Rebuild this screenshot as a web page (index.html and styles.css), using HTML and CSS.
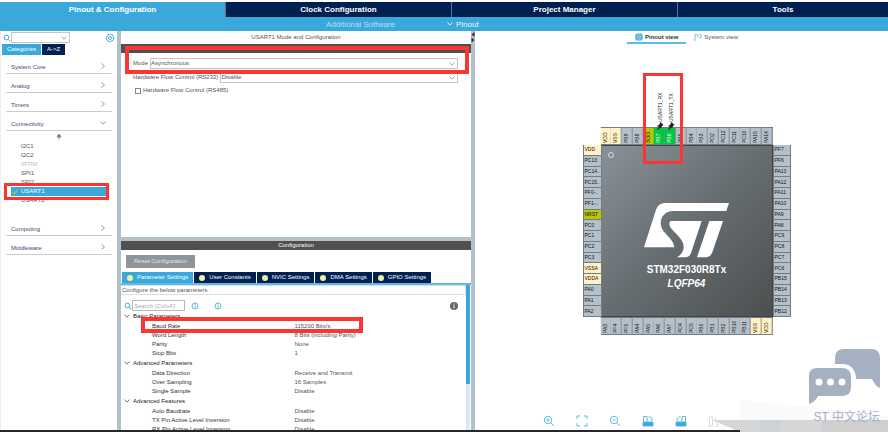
FILE: index.html
```html
<!DOCTYPE html>
<html lang="en">
<head>
    <meta charset="utf-8">
    <title>STM32CubeMX - Pinout &amp; Configuration</title>
    <link rel="stylesheet" href="styles.css">
</head>
<body>
    <!-- Shared icons -->
    <svg class="defs" aria-hidden="true">
        <symbol id="down" viewBox="0 0 8 8"><path d="M1.500 2.500L4 5.200L6.500 2.500" fill="none" stroke="currentColor"/></symbol>
        <symbol id="right" viewBox="0 0 8 8"><path d="M2.500 1.500L5.500 4L2.500 6.500" fill="none" stroke="currentColor"/></symbol>
        <symbol id="search" viewBox="0 0 8 8"><circle cx="3.500" cy="3.500" r="2.400" fill="none" stroke="currentColor"/><path d="M5.300 5.300L7.500 7.500" stroke="currentColor"/></symbol>
        <symbol id="info" viewBox="0 0 8 8"><circle cx="4" cy="4" r="3" fill="none" stroke="currentColor" stroke-width=".8"/><path d="M4 2.300v.8M4 3.700v2" stroke="currentColor"/></symbol>
        <symbol id="pushpin" viewBox="0 0 8 8"><path d="M4.500 0L8 3L6.500 3.500L5.500 6L4.500 5.500L2 8L1.500 7.500L3 4.800L1 4L3.500 2.800Z" fill="#222"/></symbol>
    </svg>

    <nav class="main-tabs">
        <button class="active">Pinout &amp; Configuration</button>
        <button>Clock Configuration</button>
        <button>Project Manager</button>
        <button>Tools</button>
    </nav>
    <div class="sub-bar">
        <a href="#" class="software">Additional Software</a>
        <a href="#" class="pinout"><svg><use href="#down"/></svg>Pinout</a>
    </div>

    <main>
        <aside class="sidebar">
            <div class="search-row">
                <svg class="icon"><use href="#search"/></svg>
                <span class="combo">
                    <select aria-label="Search peripheral"><option></option></select>
                    <svg><use href="#down"/></svg>
                </span>
                <button class="gear" aria-label="Settings">
                    <svg viewBox="0 0 10 10"><circle cx="5" cy="5" r="3.600" fill="none" stroke="#58b5e0" stroke-width="1.400" stroke-dasharray="1.800 .5"/><circle cx="5" cy="5" r="1.500" fill="none" stroke="#58b5e0"/></svg>
                </button>
            </div>
            <div class="side-tabs">
                <button class="active">Categories</button>
                <button>A-&gt;Z</button>
            </div>
            <div class="categories">
                <button>System Core <svg><use href="#right"/></svg></button>
                <button>Analog <svg><use href="#right"/></svg></button>
                <button>Timers <svg><use href="#right"/></svg></button>
                <button>Connectivity <svg><use href="#down"/></svg></button>
                <div class="peripherals">
                    <svg class="sort" viewBox="0 0 6 6"><path d="M3 0L5 2.500H1ZM1 3.500H5M3 2v4" fill="#777" stroke="#777" stroke-width=".6"/></svg>
                    <ul>
                        <li>I2C1</li>
                        <li>I2C2</li>
                        <li class="disabled">IRTIM</li>
                        <li>SPI1</li>
                        <li>SPI2</li>
                        <li class="selected"><svg viewBox="0 0 6 6"><path d="M.5 3L2.300 5L5.500 1" fill="none" stroke="#a4c81c" stroke-width="1.300"/></svg>USART1</li>
                        <li>USART2</li>
                    </ul>
                    <div class="mark mark-usart"></div>
                </div>
                <button>Computing <svg><use href="#right"/></svg></button>
                <button>Middleware <svg><use href="#right"/></svg></button>
            </div>
        </aside>

        <section class="config">
            <div class="mode-panel">
                <h1>USART1 Mode and Configuration</h1>
                <h2>Mode</h2>
                <div class="mode-form">
                    <div class="field">
                        <label for="mode">Mode</label>
                        <span class="combo">
                            <select id="mode"><option>Asynchronous</option></select>
                            <svg><use href="#down"/></svg>
                        </span>
                    </div>
                    <div class="field">
                        <label for="flow">Hardware Flow Control (RS232)</label>
                        <span class="combo">
                            <select id="flow"><option>Disable</option></select>
                            <svg><use href="#down"/></svg>
                        </span>
                    </div>
                    <label class="check"><input type="checkbox">Hardware Flow Control (RS485)</label>
                </div>
                <div class="mark mark-mode"></div>
            </div>

            <div class="param-panel">
                <h2>Configuration</h2>
                <button class="reset">Reset Configuration</button>
                <div class="param-tabs">
                    <button class="active">Parameter Settings</button>
                    <button>User Constants</button>
                    <button>NVIC Settings</button>
                    <button>DMA Settings</button>
                    <button>GPIO Settings</button>
                </div>
                <div class="param-body">
                    <div class="params">
                        <p>Configure the below parameters :</p>
                        <div class="param-search">
                            <svg class="icon"><use href="#search"/></svg>
                            <input type="text" placeholder="Search (Crtl+F)" aria-label="Search parameters">
                            <button aria-label="Previous"><svg><use href="#info"/></svg></button>
                            <button aria-label="Next"><svg><use href="#info"/></svg></button>
                            <button class="help" aria-label="Information"><svg viewBox="0 0 8 8"><circle cx="4" cy="4" r="4" fill="#666"/><path d="M4 1.500v1.200M4 3.300v3" stroke="#fff"/></svg></button>
                        </div>
                        <table>
                            <tr class="group"><th colspan="2"><svg><use href="#down"/></svg>Basic Parameters</th></tr>
                            <tr><td>Baud Rate</td><td>115200 Bits/s</td></tr>
                            <tr><td>Word Length</td><td>8 Bits (including Parity)</td></tr>
                            <tr><td>Parity</td><td>None</td></tr>
                            <tr><td>Stop Bits</td><td>1</td></tr>
                            <tr class="group"><th colspan="2"><svg><use href="#down"/></svg>Advanced Parameters</th></tr>
                            <tr><td>Data Direction</td><td>Receive and Transmit</td></tr>
                            <tr><td>Over Sampling</td><td>16 Samples</td></tr>
                            <tr><td>Single Sample</td><td>Disable</td></tr>
                            <tr class="group"><th colspan="2"><svg><use href="#down"/></svg>Advanced Features</th></tr>
                            <tr><td>Auto Baudrate</td><td>Disable</td></tr>
                            <tr><td>TX Pin Active Level Inversion</td><td>Disable</td></tr>
                            <tr><td>RX Pin Active Level Inversion</td><td>Disable</td></tr>
                        </table>
                        <div class="mark mark-baud"></div>
                    </div>
                    <div class="scrollbar"><div class="thumb"></div></div>
                </div>
            </div>
        </section>

        <div class="splitter">
            <svg viewBox="0 0 4 12"><path d="M3.500 1L.5 3.500L3.500 6ZM.5 6.500L3.500 9L.5 11.500Z" fill="#333"/></svg>
        </div>

        <section class="view">
            <div class="view-tabs">
                <button class="active"><svg viewBox="0 0 8 8"><rect x="1" y="1" width="6" height="6" rx="1" fill="#8accea" stroke="#3ba8dc"/><path d="M0 3h8M0 5h8" stroke="#3ba8dc" stroke-width=".6"/></svg>Pinout view</button>
                <button><svg viewBox="0 0 8 8"><path d="M1 8V1.500H3M4 1.500V4.500M5.500 1.500H7V5H5.500" fill="none" stroke="#6fbfe4"/></svg>System view</button>
            </div>

            <div class="chip">
                <ol class="pins top">
                    <li class="power">VDD</li><li class="power">VSS</li><li>PB9</li><li>PB8</li><li class="boot">BOO..</li>
                    <li class="used">PB7<span class="signal">USART1_RX</span><svg><use href="#pushpin"/></svg></li>
                    <li class="used">PB6<span class="signal">USART1_TX</span><svg><use href="#pushpin"/></svg></li>
                    <li>PB5</li><li>PB4</li><li>PB3</li><li>PD2</li><li>PC12</li><li>PC11</li><li>PC10</li><li>PA15</li><li>PA14</li>
                </ol>
                <ol class="pins left">
                    <li class="power">VDD</li><li>PC13</li><li>PC14..</li><li>PC15..</li><li>PF0-..</li><li>PF1-..</li><li class="boot">NRST</li><li>PC0</li>
                    <li>PC1</li><li>PC2</li><li>PC3</li><li class="power">VSSA</li><li class="power">VDDA</li><li>PA0</li><li>PA1</li><li>PA2</li>
                </ol>
                <div class="die">
                    <span class="dot"></span>
                    <svg class="logo" viewBox="0 0 255 165">
                        <path fill="#fff" d="M255 0H66C49 0 41 7 36 20L0 133H91C90 124 86 116 79 107L60 86C40 62 52 24 88 24H247Z"/>
                        <path fill="#fff" d="M79 54H173L141 150Q136 163 124 163H98C119 153 124 132 114 114C106 100 89 86 81 76C75 68 75 60 79 54Z"/>
                        <path fill="#fff" d="M196 54H237L205 148Q199 163 184 163H159Z"/>
                    </svg>
                    <strong>STM32F030R8Tx</strong>
                    <em>LQFP64</em>
                </div>
                <ol class="pins right">
                    <li>PF7</li><li>PF6</li><li>PA13</li><li>PA12</li><li>PA11</li><li>PA10</li><li>PA9</li><li>PA8</li>
                    <li>PC9</li><li>PC8</li><li>PC7</li><li>PC6</li><li>PB15</li><li>PB14</li><li>PB13</li><li>PB12</li>
                </ol>
                <ol class="pins bottom">
                    <li>PA3</li><li>PF4</li><li>PF5</li><li>PA4</li><li>PA5</li><li>PA6</li><li>PA7</li><li>PC4</li>
                    <li>PC5</li><li>PB0</li><li>PB1</li><li>PB2</li><li>PB10</li><li>PB11</li><li class="power">VSS</li><li class="power">VDD</li>
                </ol>
                <div class="mark mark-pins"></div>
            </div>

            <div class="zoom-bar">
                <button aria-label="Zoom in"><svg viewBox="0 0 12 12"><circle cx="5" cy="5" r="3.700"/><path d="M8 8L11 11M3.500 5h3M5 3.500v3"/></svg></button>
                <button aria-label="Fit"><svg viewBox="0 0 12 12"><path d="M1 4V1H4M8 1H11V4M11 8V11H8M4 11H1V8"/></svg></button>
                <button aria-label="Zoom out"><svg viewBox="0 0 12 12"><circle cx="5" cy="5" r="3.700"/><path d="M8 8L11 11M3.500 5h3"/></svg></button>
                <button aria-label="Rotate right"><svg viewBox="0 0 12 12"><path d="M1.500 7V1.500H5V7M6.500 2H8.500Q10 2 10 6"/><path class="solid" d="M1 7H11V11H1Z"/></svg></button>
                <button aria-label="Rotate left"><svg viewBox="0 0 12 12"><path d="M10.500 7V1.500H7V7M5.500 2H3.500Q2 2 2 6"/><path class="solid" d="M1 7H11V11H1Z"/></svg></button>
                <button class="faded" aria-label="Flip"><svg viewBox="0 0 12 12"><path d="M1.500 11V2H4.500V11ZM7 3L10 11H7"/></svg></button>
            </div>

            <svg class="haze" viewBox="0 0 178 34">
                <path d="M30 2L100 9L178 19V34H30Z" fill="#fafafb"/>
                <path d="M2 22H178V34H30Z" fill="#d5d6d7"/>
                <path d="M50 22H70V34H50Z" fill="#cdd2d8"/>
                <path d="M112 22H178V34H112Z" fill="#cfcfd0"/>
            </svg>
            <div class="forum">
                <svg viewBox="0 0 71 55">
                    <path fill="#a5b1c0" d="M35 0H62Q71 0 71 9V39Q66 37 63 30H47V28Q45 15 33 15H26V9Q26 0 35 0Z"/>
                    <path fill="#a5b1c0" d="M8 19H33Q42 19 42 28V38Q42 47 33 47H9Q6 53 0 55V27Q0 19 8 19Z"/>
                    <circle cx="10" cy="33" r="3.500" fill="#fff"/><circle cx="21.500" cy="33" r="3.500" fill="#fff"/><circle cx="33" cy="33" r="3.500" fill="#fff"/>
                </svg>
                <span>ST 中文论坛</span>
            </div>
        </section>
    </main>
    <footer></footer>
</body>
</html>
```
FILE: styles.css
```css
* {
    box-sizing: border-box;
}

body {
    margin: 0;
    padding-top: 2px;
    height: 100vh;
    display: flex;
    flex-direction: column;
    overflow: hidden;
    background: #fff;
    color: #555;
    font: 6px/9px "Liberation Sans", Arial, sans-serif;
}

button, select, input {
    margin: 0;
    padding: 0;
    border: none;
    border-radius: 0;
    background: none;
    color: inherit;
    font: inherit;
}

h1, h2, p, ol, ul {
    margin: 0;
    padding: 0;
    font: inherit;
    list-style: none;
}

a {
    color: inherit;
    text-decoration: none;
}

svg {
    display: block;
    flex: none;
    width: 8px;
    height: 8px;
}

.defs {
    position: absolute;
    width: 0;
    height: 0;
}

/* Red highlight boxes */
.mark {
    position: absolute;
    border: 4px solid #fb3434;
    pointer-events: none;
    z-index: 2;
}

/* Header */
.main-tabs {
    display: flex;
    height: 15px;
    flex: none;
    background: #002052;
}

.main-tabs button {
    flex: 226 1 0;
    color: #fff;
    font-size: 8px;
    font-weight: bold;
    border-right: 1px solid #5d6f8f;
}

.main-tabs button:last-child {
    flex-grow: 211;
    border-right: none;
}

.main-tabs .active {
    background: #3ba8dc;
}

.sub-bar {
    display: grid;
    grid-template-columns: 395px 1fr;
    gap: 51px;
    align-items: center;
    height: 14px;
    flex: none;
    background: #3ba8dc;
    color: #e8f5fb;
    font-size: 8px;
}

.software {
    text-align: right;
    color: #b5dff3;
}

.pinout {
    display: flex;
    align-items: center;
    gap: 2px;
}

main {
    display: flex;
    flex: 1;
    min-height: 0;
}

footer {
    flex: none;
    height: 2px;
    margin-right: 148px;
    background: #26262c;
}

/* Categories */
.sidebar {
    flex: none;
    width: 117px;
    border-left: 1px solid #eee;
}

.search-row {
    display: flex;
    align-items: center;
    height: 13px;
    padding: 0 2px;
}

.icon {
    color: #3ba8dc;
}

.combo {
    display: grid;
    align-items: center;
    border: 1px solid #c4c4c4;
    color: #555;
}

.combo select, .combo svg {
    grid-area: 1 / 1;
}

.combo select {
    appearance: none;
    width: 100%;
    height: 9px;
}

.combo svg {
    justify-self: end;
    margin-right: 1px;
    color: #aaa;
    pointer-events: none;
}

.search-row .combo {
    width: 59px;
}

.gear {
    margin-left: auto;
}

.gear svg {
    width: 10px;
    height: 10px;
}

.side-tabs {
    display: flex;
    padding-left: 1px;
    gap: 1px;
}

.side-tabs button {
    height: 11px;
    padding: 0 5px;
    background: #002052;
    color: #fff;
}

.side-tabs .active {
    background: #3ba8dc;
}

.categories {
    padding: 0 5px;
}

.categories button {
    display: flex;
    align-items: flex-end;
    justify-content: space-between;
    width: 100%;
    height: 19px;
    padding: 0 5px 1px;
    border-bottom: 1px solid #ccc;
    color: #3c4870;
}

.categories button svg {
    color: #999;
    margin-bottom: 2px;
}

.peripherals {
    position: relative;
    height: 86px;
    padding-top: 3px;
}

.sort {
    width: 6px;
    height: 6px;
    margin: 0 auto 2px;
}

.peripherals li {
    display: flex;
    align-items: center;
    padding-left: 15px;
}

.peripherals .disabled {
    color: #bbb;
    font-style: italic;
}

.peripherals .selected {
    gap: 3px;
    margin: 0 5px;
    padding-left: 1px;
    background: #3ba8dc;
    color: #fff;
}

.selected svg {
    width: 6px;
    height: 6px;
}

.mark-usart {
    top: 52px;
    left: -2px;
    right: 3px;
    height: 17px;
    border-width: 3px;
}

/* Mode and parameters */
.config {
    display: flex;
    flex-direction: column;
    flex: none;
    width: 354px;
    border-left: 4px solid #b5c1c8;
}

.config h1 {
    height: 13px;
    line-height: 13px;
    text-align: center;
}

.config h2 {
    height: 9px;
    background: #505050;
    color: #fff;
    text-align: center;
}

.mode-panel {
    position: relative;
    flex: 206 1 0;
}

.mode-form {
    display: flex;
    flex-direction: column;
    gap: 3px;
    padding: 5px 13px 0 12px;
}

.field {
    display: flex;
    align-items: center;
    gap: 2px;
}

.field .combo {
    flex: 1;
}

.check {
    display: flex;
    align-items: center;
    gap: 2px;
    padding: 0 2px;
}

.check input {
    appearance: none;
    width: 6px;
    height: 6px;
    border: 1px solid #888;
}

.mark-mode {
    top: 15px;
    left: 4px;
    right: 2px;
    height: 28px;
}

.param-panel {
    display: flex;
    flex-direction: column;
    flex: 189 1 0;
    min-height: 0;
    border-top: 4px solid #b5c1c8;
}

.param-panel h2 {
    flex: none;
}

.reset {
    align-self: flex-start;
    flex: none;
    height: 13px;
    margin: 5px 5px 4px;
    padding: 0 8px;
    background: #8e959b;
    color: #e4e6e8;
}

.param-tabs {
    display: flex;
    flex: none;
    gap: 1px;
    padding-left: 1px;
    border-bottom: 2px solid #5bbcec;
}

.param-tabs button {
    display: flex;
    align-items: center;
    gap: 4px;
    height: 11px;
    padding: 0 5px;
    background: #002052;
    color: #fff;
}

.param-tabs button::before {
    content: "";
    width: 6px;
    height: 6px;
    border-radius: 50%;
    background: #f2f29a;
}

.param-tabs .active {
    background: #3ba8dc;
}

.param-body {
    display: flex;
    flex: 1;
    min-height: 0;
}

.params {
    position: relative;
    flex: 1;
    overflow: hidden;
}

.params p {
    height: 10px;
    border: 1px solid #ddd;
    border-left: none;
    padding-left: 1px;
    line-height: 8px;
}

.param-search {
    display: flex;
    align-items: center;
    padding: 5px 8px 0 3px;
}

.param-search input {
    width: 53px;
    height: 11px;
    margin-right: 6px;
    padding: 0 1px;
    border: 1px solid #bbb;
}

.param-search input::placeholder {
    color: #aaa;
    font-style: italic;
}

.param-search button {
    margin-right: 15px;
    color: #3ba8dc;
}

.param-search .help {
    margin: 0 0 0 auto;
}

.params table {
    width: 100%;
    border-collapse: collapse;
    table-layout: fixed;
}

.params td, .params th {
    height: 9px;
    padding: 0;
}

.params td:first-child {
    padding-left: 31px;
    color: #333;
}

.params td:last-child {
    padding-left: 1px;
}

.params .group th {
    height: 11px;
    font-weight: normal;
    text-align: left;
    color: #222;
}

.group svg {
    display: inline-block;
    margin: 0 2px;
    vertical-align: middle;
    color: #777;
}

.mark-baud {
    top: 32px;
    left: 20px;
    width: 222px;
    height: 16px;
}

.scrollbar {
    width: 4px;
    margin-right: 1px;
    background: #d9e9f3;
}

.thumb {
    height: 68%;
    background: #3ba8dc;
}

.splitter {
    flex: none;
    width: 4px;
    background: #b5c1c8;
}

.splitter svg {
    width: 4px;
    height: 12px;
}

/* Pinout view */
.view {
    position: relative;
    display: flex;
    flex-direction: column;
    flex: 1;
    min-width: 0;
}

.view-tabs {
    display: flex;
    justify-content: center;
    padding-left: 10px;
}

.view-tabs button {
    display: flex;
    align-items: center;
    gap: 2px;
    height: 13px;
    padding: 1px 8px 0;
    border-bottom: 2px solid transparent;
}

.view-tabs .active {
    border-color: #5bbcec;
    color: #333;
    font-weight: bold;
}

.chip {
    position: relative;
    display: grid;
    grid-template-columns: 18px 172px 18px;
    grid-template-rows: 18px 172px 18px;
    align-self: center;
    margin: 83px 0 0 10px;
}

.pins {
    display: grid;
    color: #111;
    font-size: 5px;
    line-height: 5px;
}

.pins li {
    position: relative;
    display: flex;
    align-items: center;
    padding: 1px;
    background: #b5c1ca;
    border: 1px solid #737c82;
    white-space: nowrap;
}

.top, .bottom {
    grid-column: 2;
    grid-template-columns: repeat(16, 1fr);
}

.top li, .bottom li {
    writing-mode: vertical-rl;
    transform: rotate(180deg);
    border-right-width: 0;
}

.left, .right {
    grid-row: 2;
    grid-template-rows: repeat(16, 1fr);
}

.left li, .right li {
    border-top-width: 0;
}

.left {
    grid-column: 1;
}

.pins .power {
    background: #fff2c4;
}

.pins .boot {
    background: #b9c800;
}

.pins .used {
    background: #00c843;
    color: #fff;
}

.signal {
    position: absolute;
    top: 22px;
    left: 1px;
    color: #222;
}

.used svg {
    position: absolute;
    top: 14px;
    left: 0;
    transform: rotate(180deg);
}

.die {
    display: flex;
    flex-direction: column;
    align-items: center;
    grid-area: 2 / 2;
    padding: 6px;
    border: 1px solid #444;
    background: linear-gradient(135deg, #899198, #666d71 50%, #4c4f4f);
    color: #fff;
    font-size: 10px;
    line-height: 14px;
}

.dot {
    align-self: flex-start;
    width: 6px;
    height: 6px;
    border: 1px solid #d8dde0;
    border-radius: 50%;
}

.logo {
    width: 85px;
    height: 55px;
    margin: 45px 0 5px;
}

.die em {
    font-weight: bold;
}

.mark-pins {
    top: -54px;
    left: 60px;
    width: 40px;
    height: 91px;
    border-width: 3px;
}

.zoom-bar {
    display: flex;
    gap: 21px;
    margin: auto 0 3px;
    padding-left: 68px;
}

.zoom-bar svg {
    width: 12px;
    height: 12px;
    fill: none;
    stroke: #5bb8e3;
}

.zoom-bar .solid {
    fill: #3ba8dc;
}

.zoom-bar .faded svg {
    stroke: #ddd;
}

.haze {
    position: absolute;
    right: 0;
    bottom: -2px;
    width: 178px;
    height: 34px;
    z-index: -1;
}

.forum {
    position: absolute;
    right: 8px;
    bottom: 4px;
    color: #a3b1c4;
    font: 12px/18px "Liberation Sans", "Noto Sans CJK SC", sans-serif;
    text-align: right;
    white-space: nowrap;
}

.forum svg {
    width: 71px;
    height: 55px;
    margin-bottom: 4px;
}
```
